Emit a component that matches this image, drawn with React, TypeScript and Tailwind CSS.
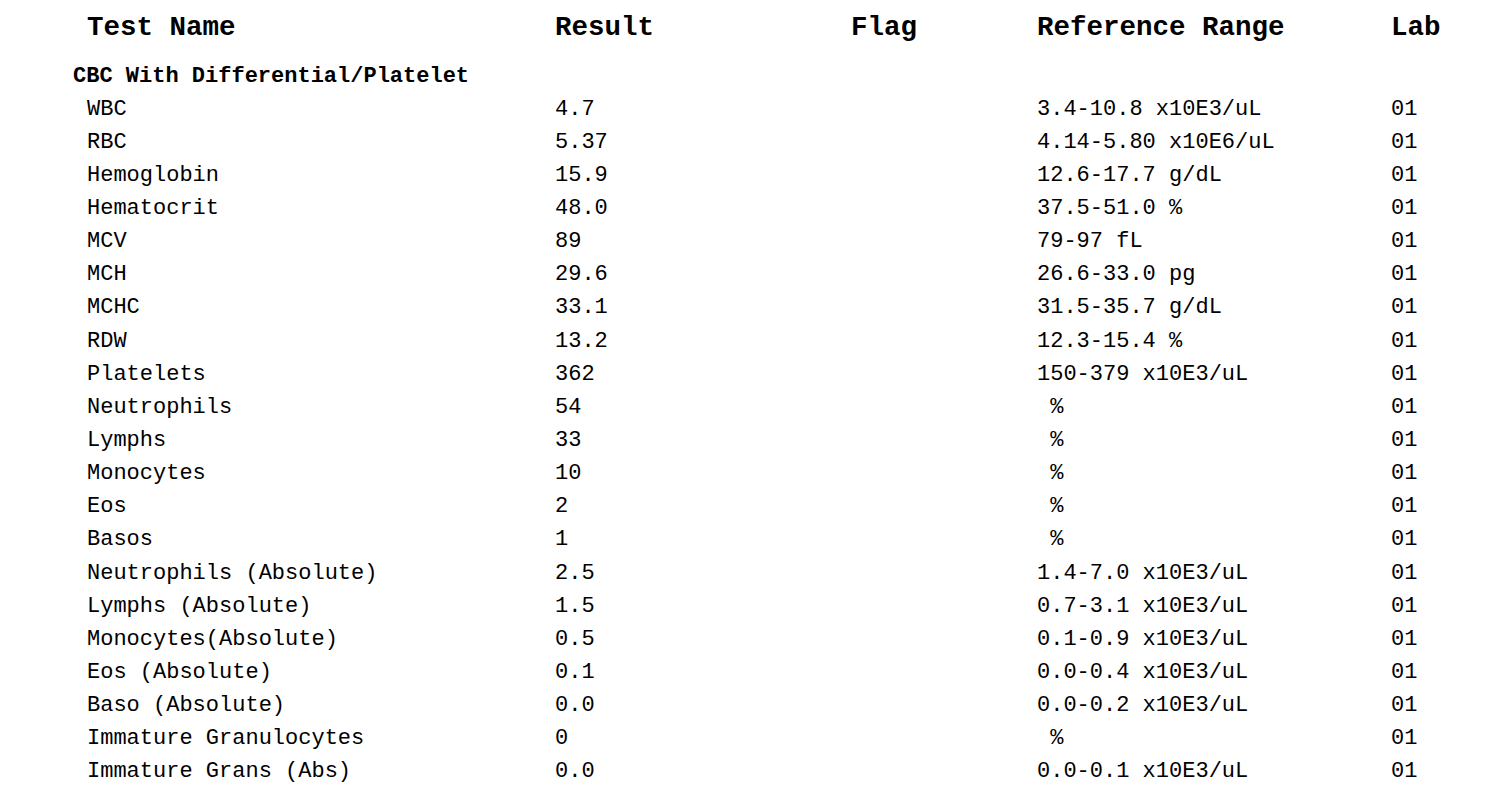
const rows: [string, string, string][] = [
  ['WBC', '4.7', '3.4-10.8 x10E3/uL'],
  ['RBC', '5.37', '4.14-5.80 x10E6/uL'],
  ['Hemoglobin', '15.9', '12.6-17.7 g/dL'],
  ['Hematocrit', '48.0', '37.5-51.0 %'],
  ['MCV', '89', '79-97 fL'],
  ['MCH', '29.6', '26.6-33.0 pg'],
  ['MCHC', '33.1', '31.5-35.7 g/dL'],
  ['RDW', '13.2', '12.3-15.4 %'],
  ['Platelets', '362', '150-379 x10E3/uL'],
  ['Neutrophils', '54', '\u00a0%'],
  ['Lymphs', '33', '\u00a0%'],
  ['Monocytes', '10', '\u00a0%'],
  ['Eos', '2', '\u00a0%'],
  ['Basos', '1', '\u00a0%'],
  ['Neutrophils (Absolute)', '2.5', '1.4-7.0 x10E3/uL'],
  ['Lymphs (Absolute)', '1.5', '0.7-3.1 x10E3/uL'],
  ['Monocytes(Absolute)', '0.5', '0.1-0.9 x10E3/uL'],
  ['Eos (Absolute)', '0.1', '0.0-0.4 x10E3/uL'],
  ['Baso (Absolute)', '0.0', '0.0-0.2 x10E3/uL'],
  ['Immature Granulocytes', '0', '\u00a0%'],
  ['Immature Grans (Abs)', '0.0', '0.0-0.1 x10E3/uL'],
];

const cols = 'grid grid-cols-[468px_296px_186px_354px_1fr]';

export default function App() {
  return (
    <div className="min-h-screen bg-white text-black pt-[2px] font-['Liberation_Mono','Courier_New',monospace] whitespace-pre">
      <div className={`${cols} pl-[87px] h-[52px] items-center text-[27.5px] font-bold leading-none`}>
        <div>Test Name</div>
        <div>Result</div>
        <div>Flag</div>
        <div>Reference Range</div>
        <div>Lab</div>
      </div>
      <div className="pl-[73px] mt-[6px] h-[33px] flex items-center text-[22px] font-bold leading-none">
        CBC With Differential/Platelet
      </div>
      {rows.map(([name, result, range]) => (
        <div key={name} className={`${cols} pl-[87px] h-[33.15px] items-center text-[22px] leading-none`}>
          <div>{name}</div>
          <div>{result}</div>
          <div></div>
          <div>{range}</div>
          <div>01</div>
        </div>
      ))}
    </div>
  );
}
